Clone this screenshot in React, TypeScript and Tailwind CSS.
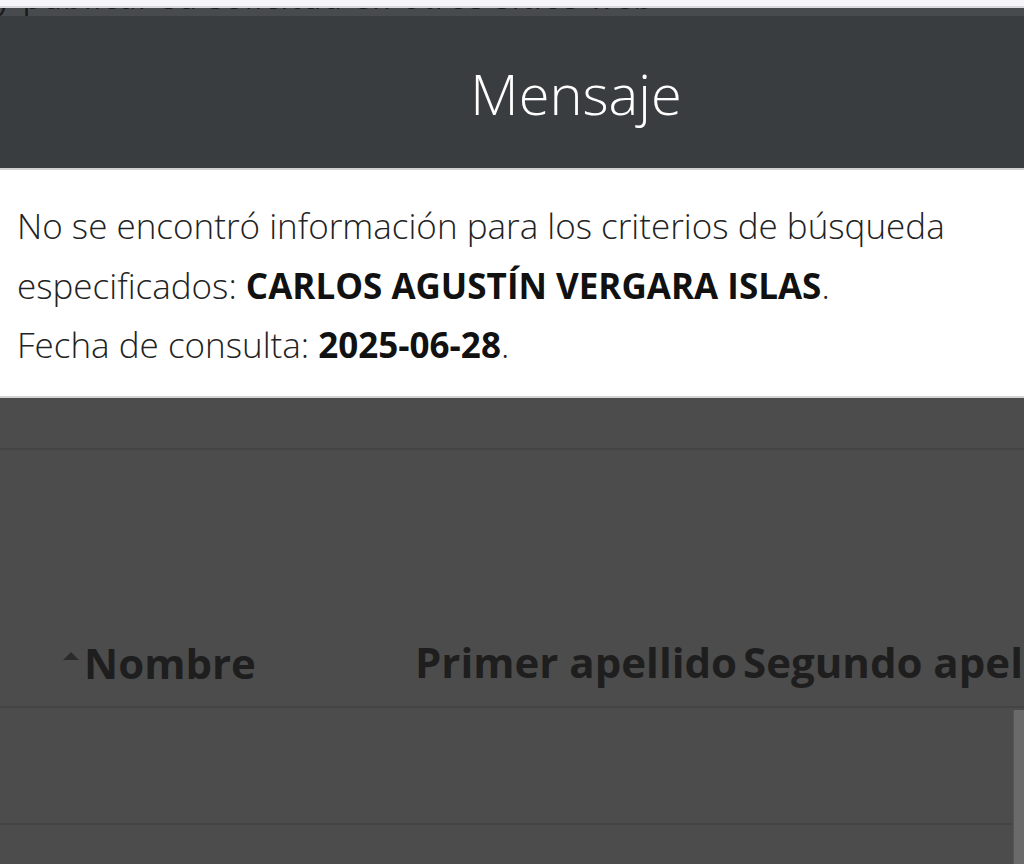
export default function App() {
  const light = { fontFamily: '"Open Sans", "Liberation Sans", sans-serif', fontWeight: 300 } as const;
  const bold = { fontFamily: '"Open Sans", "Liberation Sans", sans-serif', fontWeight: 700 } as const;
  return (
    <div className="w-[1024px] h-[864px] overflow-hidden bg-[#4c4c4c]" style={{ fontFamily: '"Open Sans", sans-serif' }}>
      <div className="h-[6px] bg-[#f6f6f9]" />
      <div className="h-[2px] bg-[#d9dadd]" />
      <div className="h-[8px] bg-[#484b4e] overflow-hidden relative">
        <div className="absolute left-[-4px] top-[-25px] text-[30px] text-[#1a1a1a] whitespace-nowrap leading-none tracking-[2px]" style={{ fontWeight: 400 }}>
          y publicar su solicitud en otros sitios web
        </div>
      </div>
      <div className="h-[152px] bg-[#3a3d40] flex items-center justify-center pl-[128px]">
        <span className="text-[56px] text-white leading-none mt-[2px]" style={light}>Mensaje</span>
      </div>
      <div className="h-[2px] bg-[#cfd0d2]" />
      <div className="bg-white h-[226px] pl-[17px] pt-[26px] text-[#222]">
        <div className="text-[35px] leading-[59.5px]" style={light}>
          <div>No se encontró información para los criterios de búsqueda</div>
          <div>
            especificados: <span className="text-[#111]" style={bold}>CARLOS AGUSTÍN VERGARA ISLAS</span>.
          </div>
          <div>
            Fecha de consulta: <span className="text-[#111]" style={bold}>2025-06-28</span>.
          </div>
        </div>
      </div>
      <div className="h-[2px] bg-[#d2d2d2]" />
      <div className="h-[52px] border-b-2 border-[#454545]" />
      <div className="h-[258px] border-b-2 border-[#444444] flex items-end pb-[22px] text-[#1e1e1e] whitespace-nowrap">
        <div className="w-[415px] shrink-0 flex items-start pl-[62px]">
          <svg width="18" height="10" viewBox="0 0 18 10" className="mt-[9px] shrink-0">
            <polygon points="1,9 9,1 17,9" fill="#2b2b2b" />
          </svg>
          <span className="text-[42px] leading-none ml-[4px]" style={bold}>Nombre</span>
        </div>
        <div className="w-[328px] shrink-0">
          <span className="text-[42px] leading-none" style={bold}>Primer apellido</span>
        </div>
        <div className="shrink-0">
          <span className="text-[42px] leading-none" style={bold}>Segundo apellido</span>
        </div>
      </div>
      <div className="flex">
        <div className="flex-1">
          <div className="h-[117px] border-b-2 border-[#444444]" />
          <div className="h-[40px]" />
        </div>
        <div className="w-[11px] h-[160px] mt-[2px] bg-[#6a6a6a] border-l border-[#555]" />
      </div>
    </div>
  );
}
